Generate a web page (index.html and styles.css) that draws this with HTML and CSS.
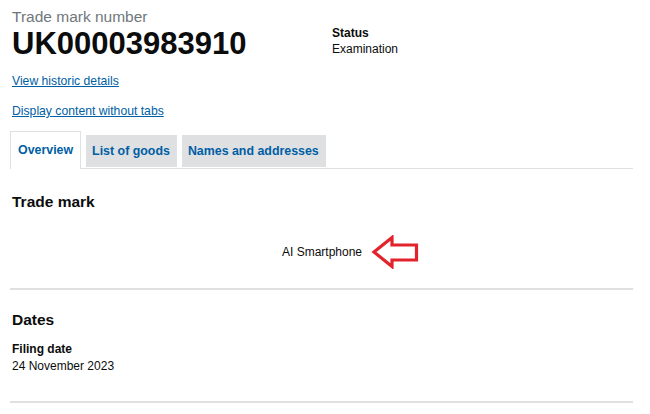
FILE: index.html
```html
<!DOCTYPE html>
<html lang="en">
<head>
    <meta charset="UTF-8">
    <meta name="viewport" content="width=device-width, initial-scale=1.0">
    <title>Trade mark UK00003983910</title>
    <link rel="stylesheet" href="styles.css">
</head>
<body>
    <div class="page">
        <div class="header">
            <div class="title">
                <span class="caption">Trade mark number</span>
                <h1>UK00003983910</h1>
            </div>
            <div class="status">
                <strong>Status</strong>
                <span>Examination</span>
            </div>
        </div>

        <p class="link"><a href="#">View historic details</a></p>
        <p class="link"><a href="#">Display content without tabs</a></p>

        <ul class="tabs">
            <li class="tab active"><a href="#">Overview</a></li>
            <li class="tab"><a href="#">List of goods</a></li>
            <li class="tab"><a href="#">Names and addresses</a></li>
        </ul>

        <div class="section">
            <h2>Trade mark</h2>
            <div class="mark">
                <span>AI Smartphone</span>
                <svg class="arrow" width="48" height="34" viewBox="0 0 48 34">
                    <polygon points="3,17 21,2.5 21,10 45.5,10 45.5,25 21,25 21,31.5" fill="none" stroke="#e3232c" stroke-width="3.2"/>
                </svg>
            </div>
        </div>

        <div class="section">
            <h2>Dates</h2>
            <dl>
                <dt>Filing date</dt>
                <dd>24 November 2023</dd>
            </dl>
        </div>
    </div>
</body>
</html>
```

FILE: styles.css
```css
body {
    font-family: "Liberation Sans", Arial, sans-serif;
    margin: 0;
    padding: 0;
    color: #0b0c0c;
    background-color: #fff;
}
.page {
    padding: 8px 17px 0 10px;
}
.header {
    display: grid;
    grid-template-columns: 320px 1fr;
    padding-left: 2px;
}
.caption {
    display: block;
    font-size: 15.5px;
    line-height: 18px;
    color: #6f777b;
}
h1 {
    margin: 0;
    font-size: 31px;
    line-height: 36px;
    font-weight: bold;
}
.status {
    padding-top: 17px;
    font-size: 12px;
    line-height: 16px;
}
.status strong,
.status span {
    display: block;
}
.link {
    margin: 0;
    padding-left: 2px;
    font-size: 12.2px;
    line-height: 16px;
}
.link + .link {
    margin-top: 14px;
}
.header + .link {
    margin-top: 11px;
}
a {
    color: #005ea5;
}
.tabs {
    display: flex;
    gap: 5px;
    list-style: none;
    margin: 12px 0 0;
    padding: 0;
    border-bottom: 1px solid #dee0e2;
}
.tab {
    margin-top: 4px;
    margin-bottom: 1px;
    background-color: #dee0e2;
}
.tab a {
    display: block;
    padding: 0 7px 0 6px;
    font-size: 12.4px;
    font-weight: bold;
    line-height: 32px;
    text-decoration: none;
}
.tab.active {
    margin-top: 0;
    margin-bottom: -1px;
    background-color: #fff;
    border: 1px solid #dee0e2;
    border-bottom: none;
}
.tab.active a {
    padding: 2px 7px 3px 7px;
}
.section {
    border-bottom: 2px solid #dee0e2;
    padding: 0 0 0 2px;
}
h2 {
    margin: 0;
    font-size: 15.5px;
    line-height: 20px;
    font-weight: bold;
}
.tabs + .section h2 {
    margin-top: 23px;
}
.mark {
    display: flex;
    justify-content: center;
    align-items: center;
    gap: 9px;
    margin: 23px 0 19px;
    padding-left: 56px;
    font-size: 12px;
}
.arrow {
    display: block;
}
.section + .section h2 {
    margin-top: 20px;
}
dl {
    margin: 11px 0 26px;
    font-size: 12px;
    line-height: 17px;
}
dt {
    font-weight: bold;
}
dd {
    margin: 0;
}
```
